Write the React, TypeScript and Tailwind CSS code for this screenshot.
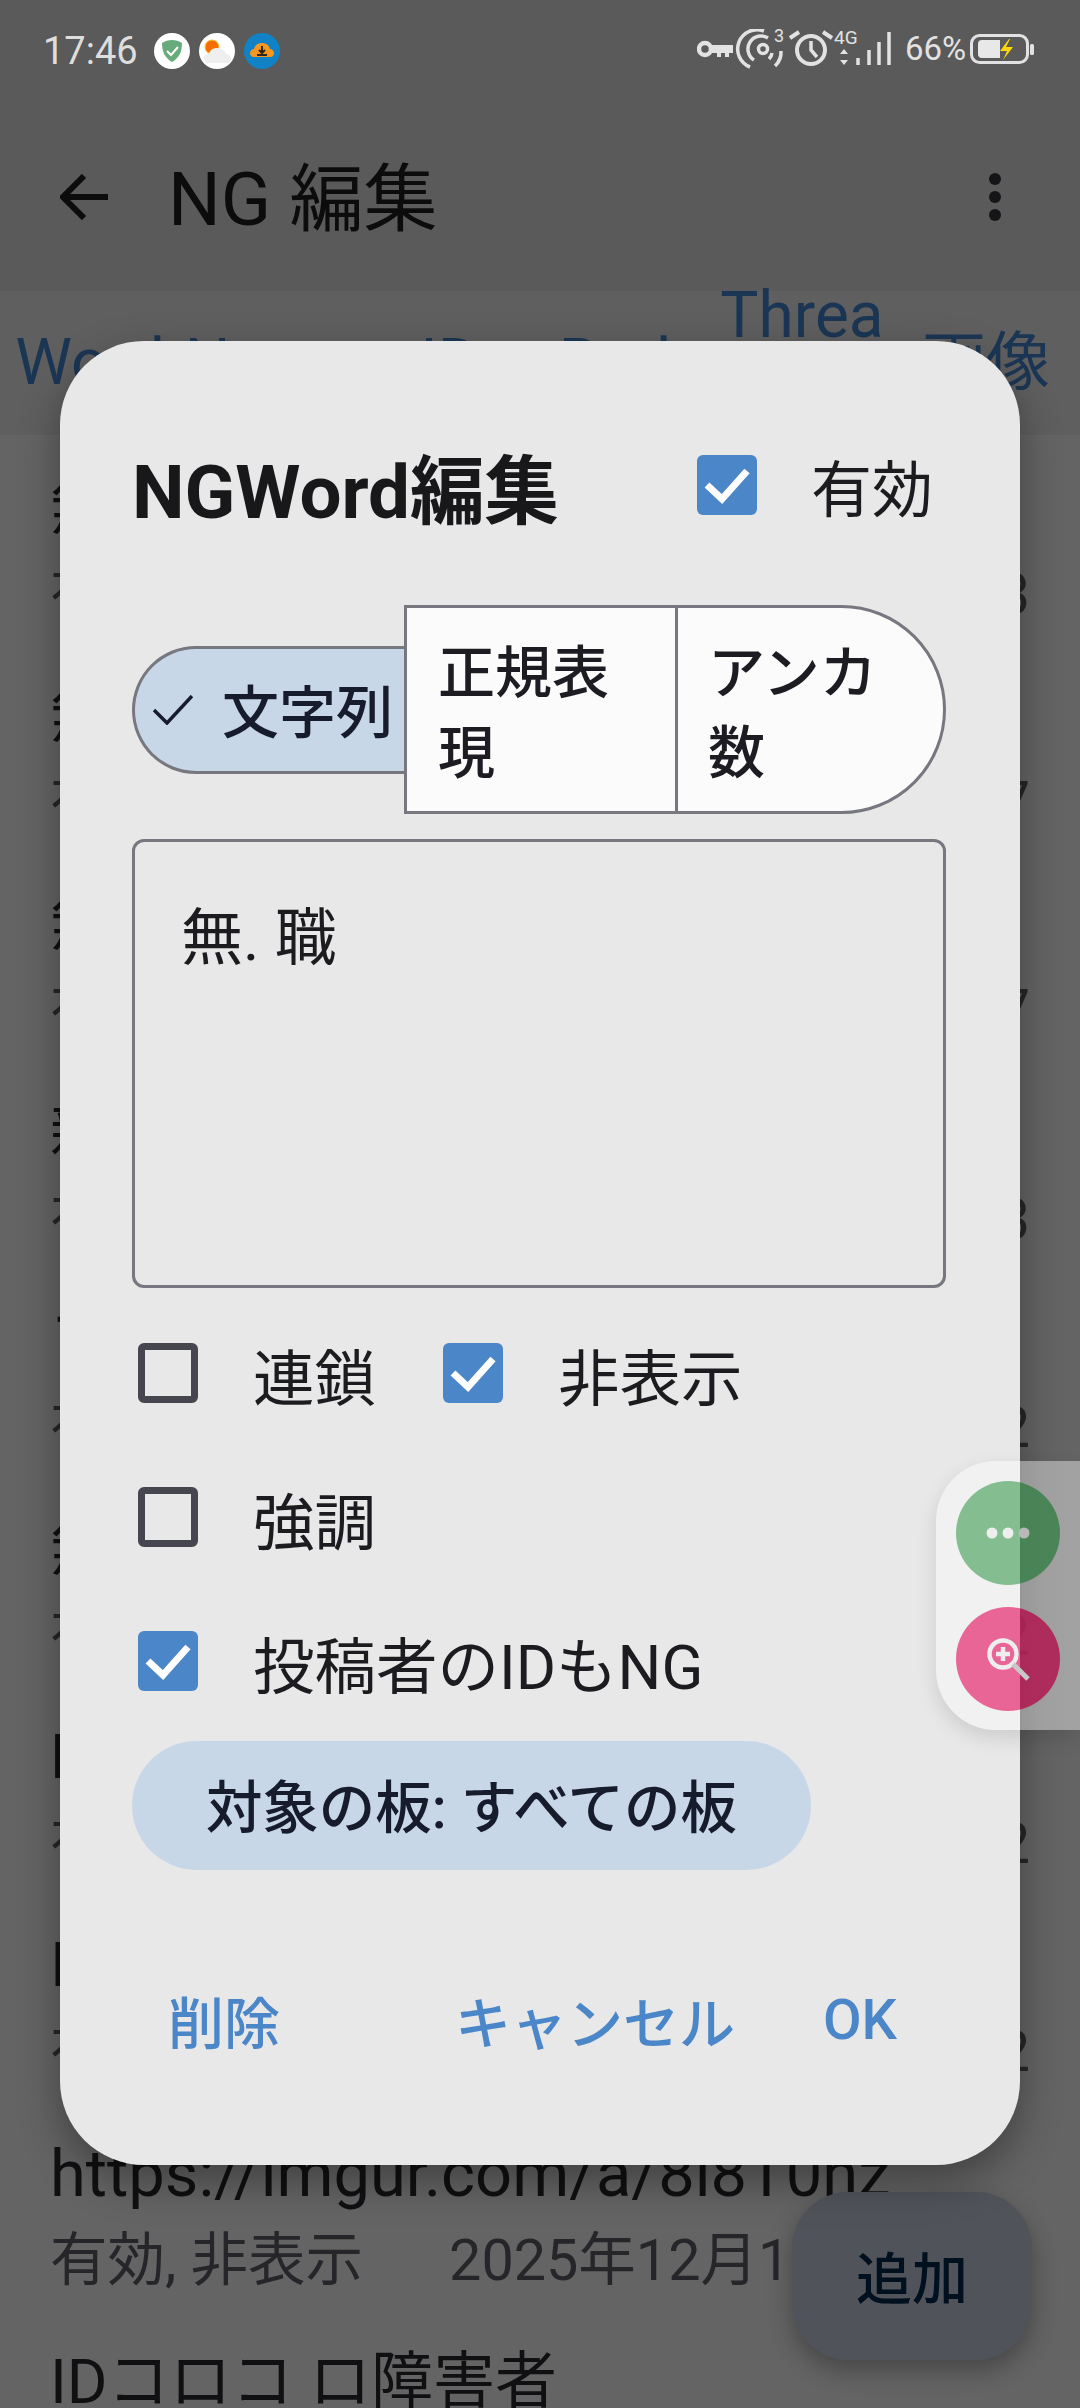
const rows = [
  { title: '無職', time: '12:33' },
  { title: '無能', time: '11:07' },
  { title: '無知', time: '10:47' },
  { title: '新卒', time: '09:13' },
  { title: 'ア', time: '08:52' },
  { title: '無職', time: '08:12' },
  { title: 'H', time: '07:32' },
  { title: 'I', time: '07:02' },
  { title: 'https://imgur.com/a/8l8T0nz', time: '06:42', latin: true },
  { title: 'IDコロコ ロ障害者', time: '06:12' },
];

const Checkbox = ({ checked }: { checked: boolean }) =>
  checked ? (
    <div className="w-[60px] h-[60px] shrink-0 rounded-[6px] bg-[#4a86c8]">
      <svg viewBox="0 0 60 60" className="w-[60px] h-[60px]">
        <polyline points="10,30 25,44 50,16" fill="none" stroke="#fff" strokeWidth="7" />
      </svg>
    </div>
  ) : (
    <div className="w-[60px] h-[60px] shrink-0 rounded-[6px] border-[7px] border-[#46464f]" />
  );

const CheckRow = ({ label, checked }: { label: string; checked: boolean }) => (
  <div className="flex items-center gap-[55px] h-[60px]">
    <Checkbox checked={checked} />
    <span className="text-[61.5px] leading-[60px] text-[#1c1c20] whitespace-nowrap mt-[14px]">{label}</span>
  </div>
);

const StatusBar = () => (
  <div className="flex items-center h-[102px] pl-[43px] pr-[45px]">
    <span className="text-[38px] leading-[44px] text-[#dedede]">17:46</span>
    <div className="flex items-center gap-[9px] ml-[16px]">
      <svg viewBox="0 0 36 36" className="w-[36px] h-[36px]">
        <circle cx="18" cy="18" r="18" fill="#fff" />
        <path d="M18 7c-4 0-7 1-10 3 0 9 3 15 10 19 7-4 10-10 10-19-3-2-6-3-10-3z" fill="#67ab7b" />
        <polyline points="13,18 17,22 24,14" fill="none" stroke="#fff" strokeWidth="2" />
      </svg>
      <svg viewBox="0 0 36 36" className="w-[36px] h-[36px]">
        <circle cx="18" cy="18" r="18" fill="#fff" />
        <circle cx="13" cy="14" r="7" fill="#f36f06" stroke="#fbc531" strokeWidth="1" />
        <path d="M10 30c-3 0-5-2-5-5s2-4 5-4c1-4 4-6 8-6 5 0 8 3 9 6 3 0 5 2 5 5s-2 4-5 4z" fill="#efefef" />
      </svg>
      <svg viewBox="0 0 36 36" className="w-[36px] h-[36px]">
        <circle cx="18" cy="18" r="18" fill="#1082c5" />
        <path d="M10 24c-3 0-4-2-4-4s2-4 4-4c1-4 4-6 8-6s7 2 8 6c2 0 4 2 4 4s-1 4-4 4z" fill="#f6971f" />
        <path d="M18 13v7M15 17l3 3 3-3M13 22h10" fill="none" stroke="#30261a" strokeWidth="2" />
      </svg>
    </div>
    <div className="flex items-center ml-auto -mt-[4px]">
      <svg viewBox="0 0 195 40" className="w-[195px] h-[40px]" fill="none" stroke="#e2e2e2">
        <circle cx="8" cy="20" r="6" strokeWidth="4.5" />
        <path d="M14 16h22v8h-4v4h-4v-4h-4v4h-4v-4h-6z" fill="#e2e2e2" stroke="none" />
        <circle cx="66" cy="20" r="4.5" strokeWidth="3.5" />
        <path d="M57 31a12 12 0 0 1 14-22" strokeWidth="3.5" />
        <path d="M75 24a10 10 0 0 1-3 6" strokeWidth="3.5" />
        <path d="M53 38a19 19 0 0 1 14-36" strokeWidth="3.5" />
        <path d="M84 22a19 19 0 0 1-6 15" strokeWidth="3.5" />
        <text x="77" y="13" fontSize="18" fill="#e2e2e2" stroke="none">3</text>
        <circle cx="114" cy="21" r="14" strokeWidth="4" />
        <path d="M114 12v9l6 7" strokeWidth="3.5" />
        <path d="M93 9l9-6M135 9l-9-6" strokeWidth="4" />
        <text x="137" y="15" fontSize="19" fill="#e2e2e2" stroke="none">4G</text>
        <path d="M147 20l4 5h-8zM147 36l4-5h-8z" fill="#e2e2e2" stroke="none" />
        <path d="M161 29v7M172 21v15M182 13v23M192 3v33" strokeWidth="3.5" />
      </svg>
      <span className="text-[33px] leading-[40px] text-[#e2e2e2] ml-[13px] w-[65px]">66%</span>
      <svg viewBox="0 0 65 30" className="w-[65px] h-[30px]">
        <rect x="1.5" y="1.5" width="56" height="27" rx="8" fill="none" stroke="#e2e2e2" strokeWidth="3" />
        <path d="M12 6h18v18H12a4 4 0 0 1-4-4V10a4 4 0 0 1 4-4z" fill="#e8e8e8" />
        <path d="M39 5 30 17h7l-4 9 10-13h-7l4-8z" fill="#ffd60a" />
        <rect x="60" y="10" width="4" height="11" rx="1.5" fill="#e2e2e2" />
      </svg>
    </div>
  </div>
);

const AppBar = () => (
  <div className="flex items-center h-[189px] pl-[60px] pr-[79px]">
    <svg viewBox="0 0 48 46" className="w-[48px] h-[46px]" fill="none" stroke="#0c0c0c" strokeWidth="6">
      <path d="M48 23H4M24 2 3 23l21 21" />
    </svg>
    <span className="ml-[60px] mt-[6px] text-[74px] leading-[90px] text-[#0c0c0c]">NG 編集</span>
    <div className="ml-auto flex flex-col gap-[6px]">
      <div className="w-[12px] h-[12px] rounded-full bg-[#151518]" />
      <div className="w-[12px] h-[12px] rounded-full bg-[#151518]" />
      <div className="w-[12px] h-[12px] rounded-full bg-[#151518]" />
    </div>
  </div>
);

const Tabs = () => (
  <div className="grid grid-cols-6 grid-rows-[144px] h-[144px] bg-[#5f5f5f] text-[64px] leading-[94px] text-[#1b3654] text-center">
    <div className="flex items-center justify-center">Word</div>
    <div className="flex items-center justify-center">Name</div>
    <div className="flex items-center justify-center">ID</div>
    <div className="flex items-center justify-center">Body</div>
    <div className="flex items-center justify-center pr-[16px]">
      Threa
      <br />d
    </div>
    <div className="flex items-center justify-center pr-[8px]">画像</div>
  </div>
);

const Row = ({ title, time, latin }: { title: string; time: string; latin?: boolean }) => (
  <div className="h-[208.2px] px-[50px] flex flex-col shrink-0">
    <div className={`${latin ? 'text-[65px]' : 'text-[62px]'} leading-[80px] text-[#101012] whitespace-nowrap`}>{title}</div>
    <div className="flex mt-[11px] text-[57.5px] leading-[72px] text-[#26262a] whitespace-nowrap">
      <span>有効, 非表示</span>
      <span className="ml-[86px]">2025年12月13日</span>
      <span className="ml-auto">{time}</span>
    </div>
  </div>
);

const Dialog = () => (
  <div className="absolute left-[60px] top-[341px] w-[960px] h-[1824px] rounded-[84px] bg-[#e8e8e8] pl-[72px] pr-[74px] pt-[110px] shadow-[0_16px_40px_rgba(0,0,0,0.35)]">
    <div className="flex items-center h-[80px]">
      <span className="text-[74.5px] leading-[80px] mt-[4px] font-bold text-[#18181b]">NGWord編集</span>
      <div className="ml-auto flex items-center gap-[54px] -mt-[12px] pr-[13px]">
        <Checkbox checked />
        <span className="text-[61px] leading-[60px] text-[#1c1c20] mt-[12px]">有効</span>
      </div>
    </div>

    <div className="flex items-center mt-[74px] text-[57px] leading-[80px] font-medium text-[#1c1c22]">
      <div className="flex items-center w-[272px] h-[128px] rounded-l-[64px] border-[3px] border-r-0 border-[#76777f] bg-[#c7d7e8] text-[#161c2c]">
        <svg viewBox="0 0 40 30" className="w-[40px] h-[30px] ml-[18px]" fill="none" stroke="#161c2c" strokeWidth="3.5">
          <path d="M1 15l13 13L39 1" />
        </svg>
        <span className="ml-[29px] mt-[8px] whitespace-nowrap">文字列</span>
      </div>
      <div className="w-[274px] h-[209px] border-[3px] border-[#76777f] bg-[#fbfbfb] pl-[31px] pr-[30px] pt-[26px]">正規表現</div>
      <div className="w-[271px] h-[209px] -ml-[3px] rounded-r-[105px] border-[3px] border-[#76777f] bg-[#fbfbfb] pl-[30px] pr-[30px] pt-[26px]">アンカ数</div>
    </div>

    <div className="mt-[25px] h-[449px] rounded-[12px] border-[3px] border-[#76777f] pl-[46px] pt-[57px] text-[62px] leading-[80px] text-[#1c1c20]">
      無. 職
    </div>

    <div className="flex flex-col gap-[84px] mt-[55px] pl-[6px]">
      <div className="flex gap-[67px]">
        <CheckRow label="連鎖" checked={false} />
        <CheckRow label="非表示" checked />
      </div>
      <CheckRow label="強調" checked={false} />
      <CheckRow label="投稿者のIDもNG" checked />
    </div>

    <div className="flex items-center justify-center w-[679px] h-[129px] mt-[50px] pt-[8px] rounded-full bg-[#c7d7e8] text-[56.5px] font-medium text-[#161c2c]">
      対象の板: すべての板
    </div>

    <div className="flex items-center mt-[120px] ml-[36px] text-[56px] leading-[70px] font-medium text-[#4a86c8] whitespace-nowrap">
      <span>削除</span>
      <span className="ml-[175px]">キャンセル</span>
      <span className="ml-[88px] -mt-[10px]">OK</span>
    </div>
  </div>
);

const FloatingBall = () => (
  <div className="absolute left-[936px] top-[1461px] w-[144px] h-[269px] rounded-l-[60px] bg-white/40 shadow-[0_8px_20px_rgba(0,0,0,0.12)] flex flex-col gap-[22px] pl-[20px] pt-[20px]">
    <div className="relative w-[104px] h-[104px] rounded-full bg-[linear-gradient(90deg,#84bd90_64px,#347d45cc_64px)]">
      <svg viewBox="0 0 104 104" className="w-[104px] h-[104px]">
        <circle cx="36" cy="52" r="5.5" fill="#eeeeee" />
        <circle cx="52" cy="52" r="5.5" fill="#eeeeee" />
        <circle cx="68" cy="52" r="5.5" fill="#b8b8b8" />
      </svg>
    </div>
    <div className="relative w-[104px] h-[104px] rounded-full bg-[linear-gradient(90deg,#e86596_64px,#b10f4bcc_64px)]">
      <svg viewBox="0 0 104 104" className="w-[104px] h-[104px]" fill="none">
        <circle cx="47" cy="47" r="13.5" stroke="#eeeeee" strokeWidth="4.5" />
        <path d="M40 47h14M47 40v14" stroke="#eeeeee" strokeWidth="4.5" />
        <path d="M57 57l15 15" stroke="#c8c8c8" strokeWidth="5" />
      </svg>
    </div>
  </div>
);

const AddFab = () => (
  <div className="absolute left-[792px] top-[2192px] w-[240px] h-[168px] pt-[8px] rounded-[56px] bg-[#50545a] flex items-center justify-center text-[56px] font-medium text-[#00101f] shadow-[0_10px_24px_rgba(0,0,0,0.3)]">
    追加
  </div>
);

export default function App() {
  return (
    <div className="relative w-[1080px] h-[2408px] overflow-hidden bg-[#646464] font-['Roboto','Noto_Sans_CJK_JP',sans-serif]">
      <div className="bg-[#5a5a5a]">
        <StatusBar />
        <AppBar />
      </div>
      <Tabs />
      <div className="flex flex-col pt-[33px]">
        {rows.map((r, i) => (
          <Row key={i} title={r.title} time={r.time} latin={r.latin} />
        ))}
      </div>
      <AddFab />
      <Dialog />
      <FloatingBall />
    </div>
  );
}
